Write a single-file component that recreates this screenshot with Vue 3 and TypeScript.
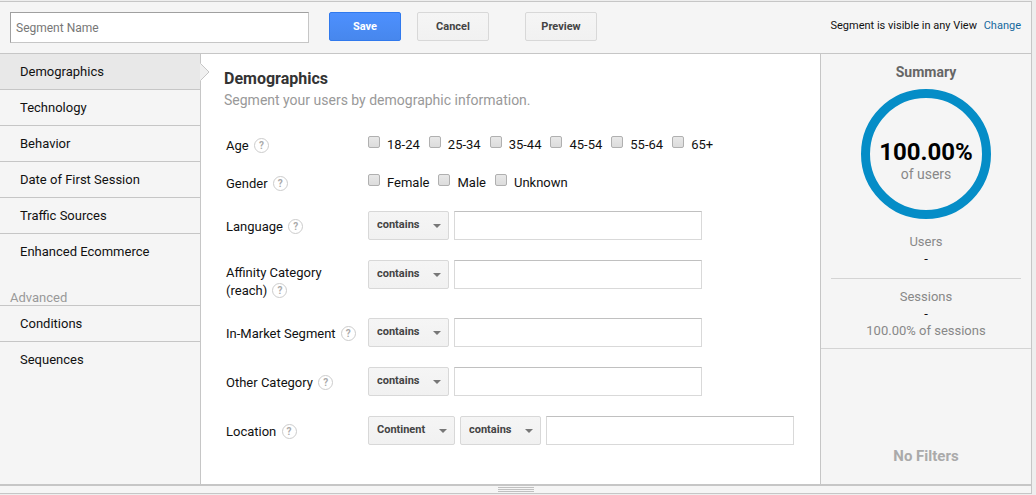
<script setup lang="ts">
import { ref } from 'vue'

interface CheckGroup {
  label: string
  options: string[]
}

interface FilterRow {
  id: string
  label: string
  selects: string[]
}

const segmentName = ref('')
const active = ref('Demographics')

const standard: string[] = [
  'Demographics',
  'Technology',
  'Behavior',
  'Date of First Session',
  'Traffic Sources',
  'Enhanced Ecommerce',
]
const advanced: string[] = ['Conditions', 'Sequences']

const groups: CheckGroup[] = [
  { label: 'Age', options: ['18-24', '25-34', '35-44', '45-54', '55-64', '65+'] },
  { label: 'Gender', options: ['Female', 'Male', 'Unknown'] },
]

const filters: FilterRow[] = [
  { id: 'language', label: 'Language', selects: ['contains'] },
  { id: 'affinity', label: 'Affinity Category (reach)', selects: ['contains'] },
  { id: 'market', label: 'In-Market Segment', selects: ['contains'] },
  { id: 'other', label: 'Other Category', selects: ['contains'] },
  { id: 'location', label: 'Location', selects: ['Continent', 'contains'] },
]
</script>

<template>
  <div class="page">
    <div class="panel">
      <header class="toolbar">
        <input v-model="segmentName" class="name" type="text" placeholder="Segment Name" aria-label="Segment Name" />
        <button class="btn primary" type="button">Save</button>
        <button class="btn" type="button">Cancel</button>
        <button class="btn preview" type="button">Preview</button>
        <p class="visibility">Segment is visible in any View <a href="#">Change</a></p>
      </header>

      <div class="body">
        <nav class="sidebar">
          <ul>
            <li v-for="item in standard" :key="item">
              <a href="#" :class="{ active: item === active }" @click.prevent="active = item">{{ item }}
                <svg v-if="item === active" class="notch" width="10" height="18" viewBox="0 0 10 18" aria-hidden="true">
                  <path d="M0 0L9 9L0 18Z" fill="#f0f0f0" />
                  <path d="M0.5 0.5L9 9L0.5 17.5" fill="none" stroke="#c6c6c6" />
                </svg>
              </a>
            </li>
          </ul>
          <h3>Advanced</h3>
          <ul>
            <li v-for="item in advanced" :key="item">
              <a href="#" :class="{ active: item === active }" @click.prevent="active = item">{{ item }}</a>
            </li>
          </ul>
        </nav>

        <main class="content">
          <h1>Demographics</h1>
          <p class="intro">Segment your users by demographic information.</p>

          <div v-for="group in groups" :key="group.label" class="row checks" role="group" :aria-label="group.label">
            <div class="label"><span>{{ group.label }} <button class="help" type="button" :aria-label="`Help: ${group.label}`">?</button></span></div>
            <div class="options">
              <label v-for="option in group.options" :key="option"><input type="checkbox" />{{ option }}</label>
            </div>
          </div>

          <div class="filters">
            <div v-for="row in filters" :key="row.id" class="row">
              <div class="label">
                <span><label :for="row.id">{{ row.label }}</label> <button class="help" type="button" :aria-label="`Help: ${row.label}`">?</button></span>
              </div>
              <div class="fields">
                <div v-for="choice in row.selects" :key="choice" class="select">
                  <select :aria-label="`${row.label} ${choice}`">
                    <option>{{ choice }}</option>
                  </select>
                  <svg width="8" height="4" viewBox="0 0 8 4" aria-hidden="true"><path d="M0 0H8L4 4Z" fill="#777" /></svg>
                </div>
                <input :id="row.id" class="value" type="text" />
              </div>
            </div>
          </div>
        </main>

        <aside class="summary">
          <h2>Summary</h2>
          <div class="ring">
            <strong>100.00%</strong>
            <span>of users</span>
          </div>
          <div class="stat">
            <span>Users</span>
            <b>-</b>
          </div>
          <div class="stat sessions">
            <span>Sessions</span>
            <b>-</b>
            <span>100.00% of sessions</span>
          </div>
          <p class="none">No Filters</p>
        </aside>
      </div>

      <div class="grip"><i></i></div>
    </div>
  </div>
</template>

<style>
body {
  background: #eee;
}
</style>

<style scoped>
.page,
.page * {
  box-sizing: border-box;
}

.page {
  display: flex;
  min-height: 100vh;
  padding: 1px 4px 1px 0;
  font-family: Roboto, "Liberation Sans", sans-serif;
  font-size: 13px;
  line-height: 18px;
  color: #111;
}

h1,
h2,
h3,
p,
ul {
  margin: 0;
  padding: 0;
}

button,
input,
select {
  margin: 0;
  font-family: inherit;
}

.panel {
  flex: 1;
  display: flex;
  flex-direction: column;
  min-width: 0;
  border: solid #c6c6c6;
  border-width: 1px 1px 1px 0;
  background: #f5f5f5;
}

.toolbar {
  display: flex;
  align-items: flex-start;
  padding: 10px;
  border-bottom: 1px solid #c6c6c6;
}

.name {
  width: 299px;
  height: 31px;
  margin-right: 20px;
  padding: 0 5px;
  border: 1px solid #c6c6c6;
  border-top-color: #a0a0a0;
  border-left-color: #a0a0a0;
  background: #fff;
  font-size: 12px;
}

.name::placeholder {
  color: #777;
}

.btn {
  width: 72px;
  height: 29px;
  margin-right: 16px;
  padding: 0;
  border: 1px solid #d8d8d8;
  border-radius: 2px;
  background: linear-gradient(#f5f5f5, #f1f1f1);
  color: #444;
  font-size: 11px;
  font-weight: 700;
}

.primary {
  border-color: #3079ed;
  background: linear-gradient(#4d90fe, #4787ed);
  color: #fff;
}

.preview {
  margin-left: 20px;
}

.visibility {
  margin-left: auto;
  padding-top: 5px;
  font-size: 11px;
}

.visibility a {
  margin-left: 4px;
  color: #15699e;
  text-decoration: none;
}

.body {
  flex: 1;
  display: flex;
  border-bottom: 2px solid #c6c6c6;
}

.sidebar {
  width: 201px;
  border-right: 1px solid #c6c6c6;
}

.sidebar ul {
  list-style: none;
}

.sidebar li + li {
  border-top: 1px solid #c6c6c6;
}

.sidebar a {
  position: relative;
  display: block;
  padding: 0 20px;
  line-height: 35px;
  color: #111;
  text-decoration: none;
}

.sidebar .active {
  background: #e8e8e8;
}

.notch {
  position: absolute;
  top: 9px;
  left: 100%;
}

.sidebar h3 {
  padding: 21px 10px 0;
  border-bottom: 1px solid #c6c6c6;
  color: #999;
  font-size: 13px;
  font-weight: 400;
  line-height: 15px;
}

.content {
  flex: 1;
  padding: 15px 24px 38px 25px;
  background: #fff;
}

h1 {
  margin-left: -2px;
  color: #333;
  font-size: 16px;
  line-height: 20px;
}

.intro {
  margin: 1px 0 25px -2px;
  color: #999;
  font-size: 14px;
  line-height: 20px;
}

.row {
  display: grid;
  grid-template-columns: 142px 1fr;
}

.checks {
  height: 38px;
}

.label {
  display: flex;
  align-items: center;
  align-self: start;
  min-height: 27px;
  margin-bottom: -2px;
  padding: 4px 8px 0 0;
}

.checks .label {
  height: 20px;
  min-height: 20px;
  padding-top: 2px;
}

.help {
  width: 15px;
  height: 15px;
  margin-left: 2px;
  padding: 0;
  border: 1px solid #ccc;
  border-radius: 50%;
  background: #fff;
  color: #aaa;
  font-size: 10px;
  font-weight: 700;
  line-height: 13px;
  vertical-align: 1px;
}

.options {
  display: flex;
  gap: 9px;
  padding-top: 1px;
}

.options label {
  display: flex;
  gap: 7px;
}

.options input {
  appearance: none;
  width: 12px;
  height: 12px;
  border: 1px solid #b0b0b0;
  border-radius: 2px;
  background: linear-gradient(#e8e8e8, #dcdcdc);
}

.filters {
  display: grid;
  gap: 20px;
}

.fields {
  display: flex;
  gap: 5px;
  height: 29px;
}

.select {
  position: relative;
}

.select select {
  appearance: none;
  height: 29px;
  padding: 0 28px 2px 8px;
  border: 1px solid #d8d8d8;
  border-radius: 2px;
  background: linear-gradient(#f5f5f5, #f1f1f1);
  color: #444;
  font-size: 11px;
  font-weight: 700;
}

.select svg {
  position: absolute;
  top: 13px;
  right: 8px;
  pointer-events: none;
}

.value {
  width: 248px;
  height: 29px;
  padding: 0 6px;
  border: 1px solid #d9d9d9;
  border-top-color: #c0c0c0;
  background: #fff;
  font-size: 13px;
}

.summary {
  display: flex;
  flex-direction: column;
  width: 211px;
  border-left: 1px solid #c6c6c6;
  color: #888;
  text-align: center;
}

.summary h2 {
  padding: 9px 0 8px;
  color: #666;
  font-size: 14px;
  line-height: 18px;
}

.ring {
  display: flex;
  flex-direction: column;
  justify-content: center;
  align-self: center;
  width: 130px;
  height: 130px;
  padding-top: 14px;
  border: 9px solid #058dc7;
  border-radius: 50%;
  font-size: 14px;
}

.ring strong {
  margin: 0 -9px;
  color: #000;
  font-size: 24px;
  font-weight: 700;
  line-height: 26px;
}

.stat {
  display: flex;
  flex-direction: column;
  margin: 0 10px;
  padding: 14px 0 11px;
  border-bottom: 1px solid #d4d4d4;
  line-height: 17px;
}

.stat b {
  color: #111;
  font-weight: 400;
}

.sessions {
  margin: 0;
  padding: 9px 0;
}

.none {
  margin-top: auto;
  padding-bottom: 19px;
  color: #aaa;
  font-size: 15px;
  font-weight: 700;
}

.grip {
  display: flex;
  justify-content: center;
  align-items: center;
  height: 7px;
}

.grip i {
  width: 36px;
  height: 5px;
  border: solid #c0c0c0;
  border-width: 1px 0;
  background: linear-gradient(transparent 1px, #c0c0c0 1px, #c0c0c0 2px, transparent 2px);
}
</style>
